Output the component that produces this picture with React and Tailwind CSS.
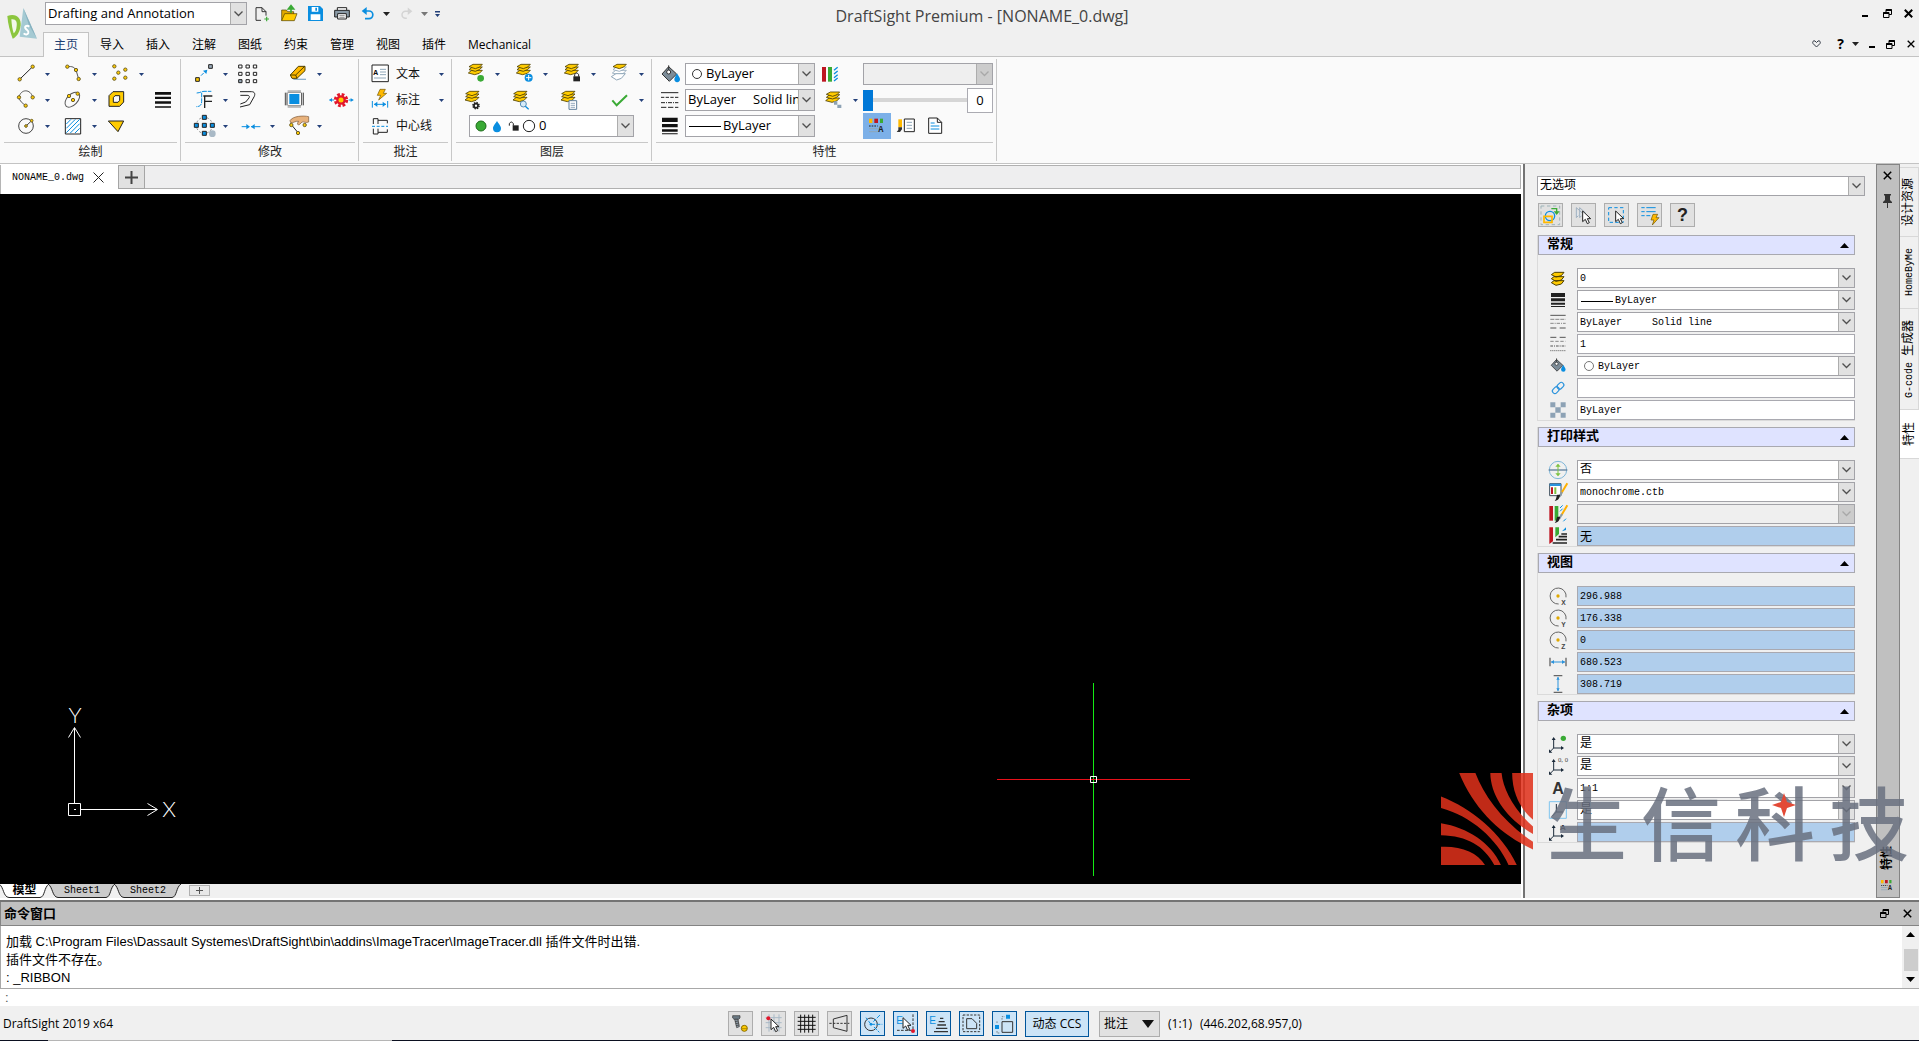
import { useState } from 'react'

/* ---------- shared bits ---------- */

const UI = "font-['Open_Sans','Noto_Sans_CJK_SC',sans-serif]"
const MONO = "font-['Liberation_Mono','Noto_Sans_CJK_SC',monospace]"
const BLUE = '#0a8ee0'

function Ico({ w = 24, h = 20, box = '0 0 72 60', children }) {
  return (
    <svg width={w} height={h} viewBox={box} fill="none" className="block shrink-0 overflow-visible" aria-hidden="true">
      {children}
    </svg>
  )
}

function Node({ x, y, r = 5 }) {
  return <circle cx={x} cy={y} r={r} fill="#ffcb00" stroke="#6f6128" strokeWidth="3" />
}

function Caret() {
  return (
    <button aria-label="展开" className="flex h-5 w-[18px] items-center justify-center">
      <svg width="5" height="3" viewBox="0 0 5 3">
        <path d="M0 0h5L2.500 3z" fill="#24417a" />
      </svg>
    </button>
  )
}

function Chevron({ muted }) {
  return (
    <svg width="9" height="6" viewBox="0 0 9 6" fill="none">
      <path d="M.5 .5l4 4 4-4" stroke={muted ? '#a8a8a8' : '#505050'} strokeWidth="1.300" />
    </svg>
  )
}

function Combo({ label, value, prefix, disabled, className }) {
  return (
    <div className={`relative flex items-center border border-[#a3a3a8] ${disabled ? 'bg-[#efefef]' : 'bg-white'} ${className}`}>
      {prefix}
      <select
        aria-label={label}
        disabled={disabled}
        className="h-full min-w-0 flex-1 appearance-none bg-transparent pr-4 pl-0.5 text-black outline-none"
      >
        <option>{value}</option>
      </select>
      <span
        className={`pointer-events-none absolute inset-y-0 right-0 flex w-4 items-center justify-center border-l border-[#adadad] ${
          disabled ? 'bg-[#cccccc]' : 'bg-[#e1e1e1]'
        }`}
      >
        <Chevron muted={disabled} />
      </span>
    </div>
  )
}

/* ---------- window buttons ---------- */

function Minimize() {
  return (
    <svg width="11" height="11" viewBox="0 0 11 11">
      <path d="M2 7h6v2H2z" fill="#000" />
    </svg>
  )
}

function Restore() {
  return (
    <svg width="9" height="9" viewBox="0 0 9 9" fill="none" stroke="#000">
      <path d="M3 3V.500h5.500v5H6" />
      <path d="M3 1h5.500M.500 4h5.500" strokeWidth="2" />
      <path d="M.500 3.500h5.500v5H.500z" />
    </svg>
  )
}

function Close({ size = 9, stroke = 2 }) {
  return (
    <svg width={size} height={size} viewBox="0 0 9 9" fill="none" stroke="#000" strokeWidth={stroke}>
      <path d="M.8 .8l7.400 7.400M8.200 .8L.8 8.200" />
    </svg>
  )
}

/* ---------- title bar ---------- */

function Logo() {
  return (
    <svg width="31" height="32" viewBox="0 0 93 96" className="block">
      <path d="M52 0l41 92-52-6z" fill="#a5cad3" />
      <path d="M52 0l41 92-24-40z" fill="#86b1bf" />
      <path d="M4 24C30 14 46 30 44 52c-2 20-12 36-24 40C12 70 6 50 4 24z" fill="#8cc63e" />
      <path d="M16 34c14-2 18 8 16 20-1 12-4 18-9 22-4-12-6-26-7-42z" fill="#f3f9ea" />
      <path d="M70 56c-8-6-16 0-11 6 4 5 11 6 8 13-2 5-9 6-14 1" stroke="#fff" strokeWidth="6" fill="none" />
    </svg>
  )
}

function QuickTools() {
  return (
    <div className="flex items-center">
      <button aria-label="新建" className="ml-2">
        <Ico w={15} h={16} box="0 0 45 48">
          <path d="M18 43H3V5h18l12 12v12M21 5v12h12" stroke="#333" strokeWidth="3" />
          <path d="M35 32v14M28 39h14" stroke="#3aaa35" strokeWidth="3.500" />
        </Ico>
      </button>
      <button aria-label="打开" className="ml-[11px]">
        <Ico w={17} h={17} box="0 0 51 51">
          <path d="M2 47V15h14l4 5h18v8" fill="#e0a800" stroke="#4a3b00" strokeWidth="2" />
          <path d="M2 47l9-21h37l-8 21z" fill="#ffcb00" stroke="#4a3b00" strokeWidth="2" />
          <path d="M30 24V8M22 12l8-10 8 10z" stroke="#3aaa35" strokeWidth="5" fill="#3aaa35" />
        </Ico>
      </button>
      <button aria-label="保存" className="ml-2.5">
        <Ico w={15} h={15} box="0 0 45 45">
          <path d="M0 0h36l9 9v36H0z" fill="#0a8ee0" />
          <path d="M11 3h20v14H11zM8 25h29v17H8z" fill="#fff" />
          <path d="M22 5h5v9h-5z" fill="#0a8ee0" />
        </Ico>
      </button>
      <button aria-label="打印" className="ml-[11px]">
        <Ico w={16} h={13} box="0 0 48 39">
          <path d="M10 10V2h28v8" stroke="#222" strokeWidth="3" fill="#fff" />
          <path d="M2 10h44v20H2z" fill="#8a9aa6" stroke="#222" strokeWidth="3" />
          <path d="M11 20h26v16H11z" fill="#fff" stroke="#222" strokeWidth="3" />
          <path d="M16 26h16M16 31h16" stroke="#555" strokeWidth="2" />
        </Ico>
      </button>
      <button aria-label="撤消" className="ml-[11px]">
        <Ico w={14} h={13} box="0 0 42 39">
          <path d="M10 12h14a11 11 0 0 1 0 23H12" stroke="#0a8ee0" strokeWidth="5" />
          <path d="M17 0L2 12l15 12z" fill="#0a8ee0" />
        </Ico>
      </button>
      <button aria-label="撤消列表" className="ml-2">
        <Ico w={7} h={4} box="0 0 7 4">
          <path d="M0 0h7L3.500 4z" fill="#222" />
        </Ico>
      </button>
      <button aria-label="恢复" className="ml-2.5">
        <Ico w={13} h={13} box="0 0 42 39">
          <path d="M32 12H18a11 11 0 0 0 0 23h4" stroke="#d4d4d4" strokeWidth="5" />
          <path d="M25 0l15 12-15 12z" fill="#d4d4d4" />
        </Ico>
      </button>
      <button aria-label="恢复列表" className="ml-2">
        <Ico w={7} h={4} box="0 0 7 4">
          <path d="M0 0h7L3.500 4z" fill="#777" />
        </Ico>
      </button>
      <button aria-label="自定义工具栏" className="ml-[7px]">
        <Ico w={5} h={6} box="0 0 5 6">
          <path d="M0 0h5v1.500H0zM0 3h5L2.500 6z" fill="#24417a" />
        </Ico>
      </button>
    </div>
  )
}

const MENUS = ['主页', '导入', '插入', '注解', '图纸', '约束', '管理', '视图', '插件']

function Header() {
  const [active, setActive] = useState('主页')
  return (
    <header className="flex border-b border-[#c3c3c3] bg-[#f0f0f0]">
      <div className="w-[43px] pt-2 pl-1.5">
        <Logo />
      </div>
      <div className="min-w-0 flex-1">
        <div className="flex h-8 items-start">
          <div className="flex pt-0.5 pl-0.5">
            <Combo label="工作空间" value="Drafting and Annotation" className="h-[23px] w-[202px] text-[13px]" />
            <QuickTools />
          </div>
          <h1 className="flex-1 pt-1 pr-[336px] text-center text-base leading-6 text-[#444]">
            DraftSight Premium - [NONAME_0.dwg]
          </h1>
          <div className="flex items-center gap-3 pt-2 pr-1.5">
            <button aria-label="最小化"><Minimize /></button>
            <button aria-label="还原"><Restore /></button>
            <button aria-label="关闭"><Close /></button>
          </div>
        </div>
        <nav className="flex h-6 items-stretch text-xs">
          {MENUS.map((m) => (
            <button
              key={m}
              onClick={() => setActive(m)}
              className={
                m === active
                  ? '-mb-px w-[46px] border border-b-0 border-[#c3c3c3] bg-[#fafafa] text-[#1d3f72]'
                  : 'w-[46px] pt-px text-black'
              }
            >
              {m}
            </button>
          ))}
          <button className="px-[11px] pt-px">Mechanical</button>
          <div className="ml-auto flex items-center gap-3 pr-1">
            <button aria-label="社区" className="mr-1">
              <Ico w={9} h={8} box="0 0 9 8">
                <path d="M4.500 7L1 3.500C0 2 1.500 0 3 1l1.500 1.500L6 1c1.500-1 3 1 2 2.500z" stroke="#333a45" />
              </Ico>
            </button>
            <button className="text-sm font-bold">?</button>
            <button aria-label="帮助列表" className="-ml-1">
              <Ico w={7} h={4} box="0 0 7 4">
                <path d="M0 0h7L3.500 4z" fill="#222" />
              </Ico>
            </button>
            <button aria-label="最小化文档" className="-mx-1"><Minimize /></button>
            <button aria-label="还原文档"><Restore /></button>
            <button aria-label="关闭文档"><Close size={8} stroke={1.5} /></button>
          </div>
        </nav>
      </div>
    </header>
  )
}

/* ---------- ribbon ---------- */

function Stack({ x = 35, y = 13, bottom = '#ffcb00', line = '#4d3f00' }) {
  return (
    <g transform={`translate(${x} ${y})`} strokeWidth="2.500">
      <path d="M-22 14l10-8h32l-9 9-14 4z" fill={bottom} stroke={bottom === '#ffcb00' ? line : '#8fa6b8'} />
      <path d="M-20 4l10-8h30l-9 8-12 5z" fill={bottom} stroke={bottom === '#ffcb00' ? line : '#8fa6b8'} />
      <path d="M-20-5l12-7h28l-8 8-13 5z" fill="#ffcb00" stroke={line} />
    </g>
  )
}

function Tool({ name, caret, children }) {
  return (
    <div className="flex items-center">
      <button aria-label={name}>
        <Ico>{children}</Ico>
      </button>
      {caret && <Caret />}
    </div>
  )
}

function Group({ title, bodyClass, children, className }) {
  return (
    <section className={`flex flex-col border-r border-[#c8c8c8] ${className}`}>
      <div className={`h-[85px] pt-0.5 ${bodyClass}`}>{children}</div>
      <h2 className="mr-[3px] ml-1 border-t border-[#c8c8c8] text-center text-xs leading-[18px] text-[#222]">{title}</h2>
    </section>
  )
}

function DrawGroup() {
  return (
    <Group title="绘制" className="w-[181px]" bodyClass="pl-3.5 grid grid-cols-[47px_47px_47px_24px] auto-rows-[26px] items-center">
      <Tool name="直线" caret>
        <path d="M17 46L56 8" stroke="#222" strokeWidth="3" />
        <Node x={56} y={8} />
        <Node x={17} y={46} />
      </Tool>
      <Tool name="多段线" caret>
        <path d="M19 8C34 6 40 10 45 18L53 45" stroke="#555" strokeWidth="3" />
        <Node x={19} y={8} />
        <Node x={45} y={18} />
        <Node x={53} y={45} />
      </Tool>
      <Tool name="点" caret>
        <Node x={19} y={7} />
        <Node x={52} y={17} />
        <Node x={31} y={26} />
        <Node x={52} y={41} />
        <Node x={19} y={44} />
      </Tool>
      <span />
      <Tool name="圆弧" caret>
        <path d="M15 22C20-4 50-4 56 22M15 22C17 34 24 38 35 47" stroke="#555" strokeWidth="3" />
        <Node x={15} y={22} />
        <Node x={56} y={22} />
        <Node x={35} y={47} />
      </Tool>
      <Tool name="椭圆" caret>
        <ellipse cx="34" cy="29" rx="27" ry="16" transform="rotate(-46 34 29)" stroke="#555" strokeWidth="3" />
        <Node x={50} y={11} />
        <Node x={24} y={18} />
        <Node x={36} y={30} />
      </Tool>
      <Tool name="面域">
        <path d="M15 5h32v31L35 49H3V17z" fill="#ffcb00" stroke="#222" strokeWidth="3" />
        <path d="M21 17h14v14l-5 6H16V23z" fill="#fafafa" stroke="#222" strokeWidth="3" />
      </Tool>
      <Tool name="多线">
        <path d="M0 6h48v8H0zM0 20h48v7H0zM0 34h48v7H0zM0 49h48v4H0z" fill="#111" />
      </Tool>
      <Tool name="圆" caret>
        <circle cx="36" cy="30" r="22" stroke="#444" strokeWidth="3" />
        <path d="M36 30L53 14" stroke="#444" strokeWidth="3" />
        <Node x={36} y={30} r={4} />
        <Node x={53} y={14} r={4} />
      </Tool>
      <Tool name="剖面线" caret>
        <path d="M13 8h46v46H13z" fill="#fff" stroke="#222" strokeWidth="3" />
        <path d="M16 24l14-14M16 37l27-27M16 50l40-40M28 51l28-28M42 51l14-14" stroke={BLUE} strokeWidth="3" />
      </Tool>
      <Tool name="遮罩">
        <path d="M1 15h46L30 47z" fill="#ffcb00" stroke="#222" strokeWidth="3" />
      </Tool>
    </Group>
  )
}

function ModifyGroup() {
  return (
    <Group title="修改" className="w-[178px]" bodyClass="pl-[11px] grid grid-cols-[47px_47px_47px_24px] auto-rows-[26px] items-center">
      <Tool name="移动" caret>
        <path d="M11 41h11v11H11z" fill="#ffcb00" stroke="#222" strokeWidth="3" />
        <path d="M50 2h11v11H50z" fill="#9fb0bf" stroke="#222" strokeWidth="3" />
        <path d="M27 35l8-8" stroke={BLUE} strokeWidth="3" />
        <path d="M46 17l-3 13-10-10z" fill={BLUE} />
      </Tool>
      <Tool name="阵列">
        {[0, 22, 44].map((y) =>
          [0, 22, 44].map((x) => (
            <path
              key={`${x}-${y}`}
              d={`M${x - 1} ${y + 3}h10v9h-10z`}
              stroke="#222"
              strokeWidth="3"
              fill={x === 0 && y === 44 ? '#9fb0bf' : '#fff'}
            />
          ))
        )}
      </Tool>
      <Tool name="删除" caret>
        <path d="M22 46h38" stroke="#8fb0cc" strokeWidth="4" />
        <path d="M13 33L37 7h20v13L33 43H18z" fill="#ffb900" stroke="#4d3f00" strokeWidth="3" />
        <path d="M13 33h16l27-26M29 33l4 10" stroke="#4d3f00" strokeWidth="3" />
      </Tool>
      <span />
      <Tool name="修剪" caret>
        <path d="M34 18h27M36 34h24M38 18v36" stroke="#222" strokeWidth="4" />
        <path d="M14 9c10 0 14-5 22-5h22M29 8v26c0 10-4 16-17 16" stroke={BLUE} strokeWidth="3" strokeDasharray="14 3" />
      </Tool>
      <Tool name="偏移">
        <path d="M3 5h34c10 0 12 6 9 14L32 44 3 51" stroke="#222" strokeWidth="3" />
        <path d="M4 16h20c8 0 8 4 6 8L20 36 4 42" stroke="#222" strokeWidth="3" />
      </Tool>
      <Tool name="拉伸">
        <path d="M10 12h30v30H10z" fill={BLUE} />
        <path d="M5 3h40M5 7h40M5 47h40M5 51h40" stroke="#555" strokeWidth="2" />
        <path d="M-2 8v38M3 8v38M47 8v38M52 8v38" stroke="#222" strokeWidth="2.500" />
      </Tool>
      <Tool name="分解">
        <path d="M-11 30h14M47 30h14" stroke={BLUE} strokeWidth="3" />
        <path d="M-3 24l-8 6 8 6zM53 24l8 6-8 6z" fill={BLUE} />
        <circle cx="24" cy="30" r="17" stroke="#e3162a" strokeWidth="9" strokeDasharray="8 5.350" />
        <circle cx="24" cy="30" r="11" fill="#ffcb00" stroke="#e3162a" strokeWidth="7" />
      </Tool>
      <Tool name="环形阵列" caret>
        <circle cx="37" cy="28" r="24" stroke="#555" strokeWidth="2" strokeDasharray="6 6" />
        {[[37, 4], [13, 28], [37, 28], [61, 28], [37, 52]].map(([x, y]) => (
          <path key={`${x}-${y}`} d={`M${x - 6} ${y - 6}h12v12h-12z`} fill={BLUE} stroke="#222" strokeWidth="3" />
        ))}
        <circle cx="61" cy="53" r="10" fill="#a9b9c6" />
      </Tool>
      <Tool name="打断" caret>
        <path d="M8 32h16M36 32h28" stroke={BLUE} strokeWidth="3" />
        <path d="M22 24l11 8-11 8zM47 24l-11 8 11 8z" fill={BLUE} />
      </Tool>
      <Tool name="编辑多段线" caret>
        <path d="M16 26L36 50" stroke="#222" strokeWidth="3" />
        <path d="M12 14c8-14 40-16 56-12v16c-10 4-14-2-20 0L40 26c-8 2-6-6-2-10-10-2-16 6-24 4z" fill="#e8b27c" stroke="#7a5636" strokeWidth="2" />
        <Node x={16} y={27} />
        <Node x={56} y={27} />
        <Node x={36} y={51} />
      </Tool>
    </Group>
  )
}

function NoteRow({ name, caret, children }) {
  return (
    <div className="flex h-[26px] items-center">
      <button className="flex items-center gap-1">
        <Ico>{children}</Ico>
        <span className="text-xs text-[#111]">{name}</span>
      </button>
      {caret && (
        <span className="ml-auto">
          <Caret />
        </span>
      )}
    </div>
  )
}

function AnnotateGroup() {
  return (
    <Group title="批注" className="w-[93px]" bodyClass="pl-[9px] pr-px">
      <NoteRow name="文本" caret>
        <path d="M12 3h49v50H12z" fill="#fff" stroke="#222" strokeWidth="3" />
        <text x="16" y="34" fontSize="24" fontWeight="bold" fontFamily="Liberation Mono, monospace" fill="#111">A</text>
        <path d="M36 16h18M36 24h18M36 32h18M18 42h36" stroke="#8fa6b8" strokeWidth="3" />
      </NoteRow>
      <NoteRow name="标注" caret>
        <path d="M36-2h16l-6 12h10L32 30l6-14H28z" fill="#ffb900" stroke="#6b5200" strokeWidth="2" />
        <path d="M13 33v20M59 33v20M18 43h36" stroke={BLUE} strokeWidth="3" />
        <path d="M28 35l-10 8 10 8zM44 35l10 8-10 8z" fill={BLUE} />
      </NoteRow>
      <NoteRow name="中心线">
        <path d="M16 24V8h14v16M16 38v16h14V38M30 13h28v9M30 49h28v-9" stroke="#222" strokeWidth="3" />
        <path d="M12 31h48" stroke={BLUE} strokeWidth="3" strokeDasharray="9 5" />
      </NoteRow>
    </Group>
  )
}

function LayerGroup() {
  return (
    <Group title="图层" className="w-[200px]" bodyClass="pl-3">
      <div className="grid auto-rows-[26px] grid-cols-[48px_48px_48px_42px] items-center">
        <Tool name="显示图层" caret>
          <Stack />
          <circle cx="50" cy="43" r="10" fill="#3aaa35" />
        </Tool>
        <Tool name="冻结图层" caret>
          <Stack />
          <circle cx="50" cy="41" r="12" fill={BLUE} />
          <path d="M50 33v16M42 41h16" stroke="#fff" strokeWidth="3" />
        </Tool>
        <Tool name="锁定图层" caret>
          <Stack />
          <path d="M44 38v-6q6-10 12 0v6" stroke="#222" strokeWidth="3" />
          <path d="M40 37h20v15H40z" fill="#222" />
        </Tool>
        <Tool name="隔离图层" caret>
          <Stack bottom="#fff" />
          <path d="M10 38l14-9h28l-12 14-14 5z" fill="#fff" stroke="#8fa6b8" strokeWidth="3" />
        </Tool>
        <Tool name="图层管理器">
          <Stack x={25} y={16} />
          <circle cx="36" cy="47" r="9" stroke="#222" strokeWidth="5" strokeDasharray="4 3.070" />
          <circle cx="36" cy="47" r="6" fill="#fff" stroke="#222" strokeWidth="5" />
        </Tool>
        <Tool name="图层预览">
          <Stack x={25} y={16} />
          <circle cx="34" cy="42" r="9" fill="#d6ecfa" stroke="#5a8db5" strokeWidth="3" />
          <path d="M40 49l10 9" stroke={BLUE} strokeWidth="4" />
        </Tool>
        <Tool name="图层状态">
          <Stack x={25} y={16} />
          <path d="M27 32h23v26H27z" fill="#fff" stroke="#5f7f9c" strokeWidth="3" />
          <path d="M32 40h13M32 46h13M32 52h13" stroke="#5f7f9c" strokeWidth="2" />
        </Tool>
        <Tool name="激活图层" caret>
          <path d="M13 31l13 15L57 16" stroke="#3aaa35" strokeWidth="6" />
        </Tool>
      </div>
      <Combo
        label="当前图层"
        value="0"
        className="mt-0.5 ml-[5px] h-[22px] w-[165px] text-[13px]"
        prefix={
          <Ico w={67} h={14} box="0 0 201 42">
            <circle cx="33" cy="21" r="15" fill="#3aaa35" stroke="#1d6b1a" strokeWidth="3" />
            <path d="M81 6c8 12 12 16 12 22a12 12 0 0 1-24 0c0-6 4-10 12-22z" fill={BLUE} />
            <path d="M118 20v-6q6-10 12 0v6" stroke="#222" strokeWidth="3" />
            <path d="M128 19h18v16h-18z" fill="#222" />
            <circle cx="177" cy="21" r="17" fill="#fff" stroke="#222" strokeWidth="3" />
          </Ico>
        }
      />
    </Group>
  )
}

function PaintIcon() {
  return (
    <>
      <path d="M12 30L32 8l24 22-22 22z" fill="#7c8c98" stroke="#333" strokeWidth="3" />
      <path d="M32 4v22" stroke="#333" strokeWidth="3" />
      <circle cx="32" cy="24" r="6" fill="#fff" stroke="#333" strokeWidth="3" />
      <path d="M57 28c6 10 9 14 9 18a8 8 0 0 1-17 0c0-4 3-8 8-18z" fill={BLUE} />
    </>
  )
}

function PropGlyph() {
  return (
    <>
      <path d="M12 8h10v13H12z" fill="#ffb900" />
      <path d="M28 8h11v13H28z" fill="#be1622" />
      <path d="M45 8h9v13h-9z" fill="#3aaa35" />
      <path d="M12 30h26" stroke="#222" strokeWidth="3" strokeDasharray="5 3" />
      <path d="M12 38h26M12 47h26" stroke="#8fa6b8" strokeWidth="3" />
      <text x="40" y="49" fontSize="26" fontWeight="bold" fontFamily="Liberation Mono, monospace" fill="#222">A</text>
    </>
  )
}

function PropertiesGroup() {
  const [transparency, setTransparency] = useState(0)
  const swatch = (
    <Ico w={18} h={14} box="0 0 18 14">
      <circle cx="11" cy="7" r="4.500" stroke="#333" />
    </Ico>
  )
  const dash = (
    <Ico w={35} h={14} box="0 0 35 14">
      <path d="M3 7.500h32" stroke="#000" />
    </Ico>
  )
  return (
    <Group title="特性" className="w-[345px]" bodyClass="flex pl-1.5">
      <div className="flex flex-col">
        <div className="flex h-[26px] items-center">
          <Ico><PaintIcon /></Ico>
          <Combo label="线条颜色" value="ByLayer" prefix={swatch} className="ml-[3px] h-[22px] w-[130px] text-[13px]" />
        </div>
        <div className="flex h-[26px] items-center">
          <Ico>
            <g stroke="#222" strokeWidth="3">
              <path d="M9 8h52" />
              <path d="M9 22h52" strokeDasharray="10 4" />
              <path d="M9 38h52" strokeDasharray="12 3 3 3" />
              <path d="M9 52h52" strokeDasharray="16 5" />
            </g>
          </Ico>
          <Combo
            label="线条样式"
            value={'ByLayer\u00a0\u00a0\u00a0\u00a0\u00a0Solid line'}
            className="ml-[3px] h-[22px] w-[130px] text-[13px]"
          />
        </div>
        <div className="flex h-[26px] items-center">
          <Ico>
            <path d="M12 5h47v13H12zM12 24h47v10H12zM12 40h47v7H12zM12 52h47v3H12z" fill="#111" />
          </Ico>
          <Combo label="线宽" value="ByLayer" prefix={dash} className="ml-[3px] h-[22px] w-[130px] text-[13px]" />
        </div>
      </div>

      <div className="ml-[3px] w-[42px]">
        <div className="flex h-[26px] items-center">
          <Tool name="图案">
            <path d="M12 9h12v44H12z" fill="#be1622" />
            <path d="M30 9h12v44H30z" fill="#3aaa35" />
            <path d="M48 19l11-9M48 30l11-9M48 41l11-9M48 51l11-9" stroke={BLUE} strokeWidth="4" />
          </Tool>
        </div>
        <div className="flex h-[26px] items-center pl-1">
          <Tool name="图层透明度" caret>
            <Stack x={33} y={18} />
            <path d="M36 34h10v10H36zM46 44h12v10H46z" fill="#8da2b5" />
          </Tool>
        </div>
      </div>

      <div className="ml-[3px] w-[130px]">
        <div className="flex h-[26px] items-center">
          <Combo label="打印样式" value="" disabled className="h-[22px] w-full text-[13px]" />
        </div>
        <div className="flex h-[26px] items-center">
          <input
            type="range"
            aria-label="透明度"
            min="0"
            max="90"
            value={transparency}
            onChange={(e) => setTransparency(Number(e.target.value))}
            className="h-[21px] w-[104px] appearance-none bg-[linear-gradient(#d6d6d6,#d6d6d6)] bg-[length:100%_4px] bg-center bg-no-repeat [&::-webkit-slider-thumb]:h-[21px] [&::-webkit-slider-thumb]:w-2.5 [&::-webkit-slider-thumb]:appearance-none [&::-webkit-slider-thumb]:bg-[#0078d7]"
          />
          <input
            aria-label="透明度值"
            value={transparency}
            onChange={(e) => setTransparency(Number(e.target.value) || 0)}
            className="h-[25px] w-[26px] border border-[#ababb2] bg-white text-center text-[13px] text-black"
          />
        </div>
        <div className="flex h-[26px] items-center">
          <button aria-label="特性面板" className="flex h-[26px] w-7 items-center justify-center bg-[#7cb0e8]">
            <Ico><PropGlyph /></Ico>
          </button>
          <button aria-label="特性刷" className="ml-1">
            <Ico>
              <path d="M10 10h11v24H10z" fill="#ffb900" />
              <path d="M10 34h11v6l-6 8H5l5-6z" fill="#333" />
              <path d="M28 9h30v38H28z" fill="#fff" stroke="#222" strokeWidth="3" />
              <path d="M35 19h16M35 28h16M35 37h16" stroke="#8fa6b8" strokeWidth="3" />
            </Ico>
          </button>
          <button aria-label="属性列表" className="ml-1.5">
            <Ico>
              <path d="M11 6h26l13 13v33H11z" fill="#fff" stroke="#222" strokeWidth="3" />
              <path d="M37 6v13h13" stroke="#222" strokeWidth="3" />
              <path d="M17 21h12M17 30h26M17 39h26" stroke={BLUE} strokeWidth="3" />
            </Ico>
          </button>
        </div>
      </div>
    </Group>
  )
}

function Ribbon() {
  return (
    <div className="flex h-[107px] border-b border-[#c3c3c3] bg-[#fafafa] py-0.5">
      <DrawGroup />
      <ModifyGroup />
      <AnnotateGroup />
      <LayerGroup />
      <PropertiesGroup />
    </div>
  )
}

/* ---------- drawing area ---------- */

function DocTabs() {
  return (
    <div className={`flex h-[30px] bg-white pt-px text-[10px] ${MONO}`}>
      <div className="flex w-[118px] items-center gap-[9px] border-l border-[#b5b5b5] pb-1 pl-[11px]">
        <span className="text-black">NONAME_0.dwg</span>
        <button aria-label="关闭图纸">
          <svg width="11" height="11" viewBox="0 0 11 11">
            <path d="M.500 .500l10 10M10.500 .500l-10 10" stroke="#222" />
          </svg>
        </button>
      </div>
      <button aria-label="新建图纸" className="flex h-6 w-[27px] items-center justify-center border border-[#a5a5a5] bg-[#e1e1e1]">
        <svg width="13" height="13" viewBox="0 0 13 13">
          <path d="M6.500 0v13M0 6.500h13" stroke="#444" strokeWidth="2" />
        </svg>
      </button>
      <div className="h-6 flex-1 border-y border-r border-[#b0b0b0] bg-[#eeeeef]" />
    </div>
  )
}

function Canvas() {
  return (
    <main className="relative flex-1 overflow-hidden bg-black">
      {/* coordinate system marker */}
      <svg width="120" height="120" viewBox="0 0 120 120" fill="none" stroke="#fff" className="absolute bottom-[63px] left-[62px]">
        <path d="M6.500 102.500h12v12h-12zM12 108.500h2M12.500 102V27M6.500 36.500l6-10 6 10" />
        <path d="M19 108.500h76M85.500 102.500l10 6-10 6" />
        <g fill="#fff" stroke="none" fontSize="22" fontFamily="Lato, sans-serif" fontWeight="300" textAnchor="middle">
          <text x="13" y="22">Y</text>
          <text x="107" y="116">X</text>
        </g>
      </svg>
      {/* crosshair */}
      <svg width="193" height="193" viewBox="0 0 193 193" fill="none" className="absolute right-[331px] bottom-2">
        <path d="M96.500 0v193" stroke="#14ea14" />
        <path d="M0 96.500h193" stroke="#e8101a" />
        <path d="M93.500 93.500h6v6h-6z" stroke="#fff" />
      </svg>
    </main>
  )
}

function SheetTab({ name, width, active, className }) {
  return (
    <button className={`relative flex h-3.5 items-center justify-center leading-[14px] text-black ${className}`}>
      <svg width={width} height="14" viewBox={`0 0 ${width} 14`} className="absolute inset-0 overflow-visible">
        <path
          d={`M-1 0C4 3 3 13 9 13.500H${width - 9}C${width - 4} 13 ${width - 5} 3 ${width} 0`}
          fill={active ? '#fff' : '#cbcbcb'}
          stroke="#222"
        />
      </svg>
      <span className="relative">{name}</span>
    </button>
  )
}

function SheetTabs() {
  return (
    <div className={`flex h-3.5 bg-[#f0f0f0] text-[10px] ${MONO}`}>
      <SheetTab name="模型" width={49} active className="w-[49px] text-xs font-bold" />
      <SheetTab name="Sheet1" width={66} className="w-[66px]" />
      <SheetTab name="Sheet2" width={66} className="w-[66px]" />
      <button aria-label="新建图纸页" className="mt-px ml-2 flex h-[11px] w-[21px] items-center justify-center border border-[#b0b0b0] bg-[#e8e8e8]">
        <svg width="7" height="7" viewBox="0 0 7 7">
          <path d="M3.500 0v7M0 3.500h7" stroke="#555" />
        </svg>
      </button>
    </div>
  )
}

/* ---------- properties panel ---------- */

function Axes({ children }) {
  return (
    <>
      <path d="M17 14v28h26M17 42L5 54" stroke="#1b2a3a" strokeWidth="3" />
      <path d="M11 18l6-9 6 9zM39 36l9 6-9 6zM3 46v10h10z" fill="#1b2a3a" />
      {children}
    </>
  )
}

function CenterIcon({ axis }) {
  return (
    <>
      <path d="M54 34A24 24 0 1 0 32 54" stroke="#666" strokeWidth="3" />
      <circle cx="30" cy="30" r="5" fill="#e0a800" />
      <text x="40" y="56" fontSize="20" fontWeight="bold" fontFamily="Liberation Sans, sans-serif" fill="#444">{axis}</text>
    </>
  )
}

function Brush() {
  return (
    <>
      <path d="M58 4L40 34" stroke="#ffb000" strokeWidth="6" />
      <path d="M42 30L34 44" stroke="#8a9aa6" strokeWidth="6" />
      <path d="M36 38c0 10-6 18-16 18 6-4 4-12 8-18z" fill="#222" />
    </>
  )
}

const ring = (
  <Ico w={18} h={14} box="0 0 18 14">
    <circle cx="11" cy="7" r="4.500" stroke="#777" />
  </Ico>
)
const longDash = (
  <Ico w={35} h={14} box="0 0 35 14">
    <path d="M3 8.500h32" stroke="#000" />
  </Ico>
)

const SECTIONS = [
  {
    title: '常规',
    rows: [
      { name: '图层', kind: 'combo', value: '0', icon: <path d="M10 44l8-6h30l-8 10-16 4zM10 32l8-6h30l-8 10-16 4zM10 20l10-7h28l-8 10-16 4z" fill="#ffcb00" stroke="#4d3f00" strokeWidth="3" /> },
      { name: '线宽', kind: 'combo', value: 'ByLayer', prefix: longDash, icon: <path d="M9 9h42v12H9zM9 25h42v9H9zM9 38h42v6H9zM9 48h42v3H9z" fill="#222" /> },
      { name: '线条样式', kind: 'combo', value: 'ByLayer\u00a0\u00a0\u00a0\u00a0\u00a0Solid line', icon: <><path d="M7 10h46" stroke="#555" strokeWidth="3" /><path d="M7 22h46" stroke="#888" strokeWidth="3" strokeDasharray="12 3" /><path d="M7 34h46" stroke="#888" strokeWidth="3" strokeDasharray="10 3 3 3" /><path d="M7 48h46" stroke="#555" strokeWidth="3" strokeDasharray="18 10" /></> },
      { name: '线型比例', kind: 'text', value: '1', icon: <><path d="M7 10h46" stroke="#555" strokeWidth="3" strokeDasharray="18 10" /><path d="M7 22h46" stroke="#888" strokeWidth="3" strokeDasharray="10 5" /><path d="M7 36h46" stroke="#555" strokeWidth="3" strokeDasharray="8 3 3 3" /><path d="M7 50h46" stroke="#555" strokeWidth="3" strokeDasharray="3 3" /></> },
      { name: '颜色', kind: 'combo', value: 'ByLayer', prefix: ring, icon: <g transform="translate(0 4) scale(.8)"><PaintIcon /></g> },
      { name: '超链接', kind: 'text', value: '', icon: <g stroke="#2b93dc" strokeWidth="3.500"><rect x="-11" y="-7" width="22" height="15" rx="7" transform="translate(23 36) rotate(-45)" /><rect x="-11" y="-7" width="22" height="15" rx="7" transform="translate(37 23) rotate(-45)" /></g> },
      { name: '透明度', kind: 'text', value: 'ByLayer', icon: <path d="M7 7h15v15H7zM38 7h15v15H38zM22 22h16v16H22zM7 38h15v15H7zM38 38h15v15H38z" fill="#8da2b5" /> },
    ],
  },
  {
    title: '打印样式',
    rows: [
      { name: '打印', kind: 'combo', value: '否', icon: <><circle cx="30" cy="30" r="26" stroke="#7fb6d8" strokeWidth="3" /><path d="M2 30h56" stroke="#5f7f9c" strokeWidth="4" /><path d="M30 14v32" stroke="#7cc242" strokeWidth="3" /><path d="M22 20l8-9 8 9zM22 40l8 9 8-9z" fill="#7cc242" /></> },
      { name: '打印样式表', kind: 'combo', value: 'monochrome.ctb', icon: <><path d="M5 5h34v36H5z" fill="#fff" stroke="#3b4b5a" strokeWidth="3" /><path d="M5 5h34v7H5z" fill="#2b93dc" /><path d="M9 16h6v20H9z" fill="#be1622" /><path d="M19 16h6v20h-6z" fill="#7cc242" /><Brush /></> },
      { name: '打印样式名', kind: 'combo', value: '', disabled: true, icon: <><path d="M4 6h11v44H4z" fill="#be1622" /><path d="M20 6h11v44H20z" fill="#3aaa35" /><path d="M36 12l8-8M36 22l8-8M46 52l8-8" stroke={BLUE} strokeWidth="3" /><Brush /></> },
      { name: '打印表类型', kind: 'readonly', value: '无', icon: <><path d="M4 4h11v42L4 54z" fill="#be1622" /><path d="M22 4h11v20l-11 10z" fill="#3aaa35" /><path d="M42 16l12-12v8z" fill={BLUE} /><path d="M40 24h17M32 32h25M24 41h33M14 51h43" stroke="#222" strokeWidth="5" /></> },
    ],
  },
  {
    title: '视图',
    rows: [
      { name: '中心 X', kind: 'readonly', value: '296.988', icon: <CenterIcon axis="X" /> },
      { name: '中心 Y', kind: 'readonly', value: '176.338', icon: <CenterIcon axis="Y" /> },
      { name: '中心 Z', kind: 'readonly', value: '0', icon: <CenterIcon axis="Z" /> },
      { name: '宽度', kind: 'readonly', value: '680.523', icon: <><path d="M6 17v26M54 17v26" stroke="#666" strokeWidth="4" /><path d="M9 30h42" stroke="#2b93dc" strokeWidth="3" /><path d="M18 24l-9 6 9 6zM42 24l9 6-9 6z" fill="#2b93dc" /></> },
      { name: '高度', kind: 'readonly', value: '308.719', icon: <><path d="M17 5h26M17 55h26" stroke="#666" strokeWidth="4" /><path d="M30 9v42" stroke="#2b93dc" strokeWidth="3" /><path d="M25 17l5-8 5 8zM25 43l5 8 5-8z" fill="#2b93dc" /></> },
    ],
  },
  {
    title: '杂项',
    rows: [
      { name: 'CCS 图标', kind: 'combo', value: '是', icon: <Axes><circle cx="46" cy="13" r="8" fill="#3aaa35" /></Axes> },
      { name: '原点 CCS', kind: 'combo', value: '是', icon: <Axes><text x="30" y="17" fontSize="20" fontFamily="Liberation Serif, serif" fill="#444">0, 0</text></Axes> },
      { name: '注释比例', kind: 'combo', value: '1:1', icon: <text x="30" y="48" fontSize="48" textAnchor="middle" fontWeight="bold" fontFamily="Liberation Sans, sans-serif" fill="#333">A</text> },
      { name: '视口 CCS', kind: 'combo', value: '是', icon: <><path d="M4 5h51v50H4z" stroke="#7fc4ee" strokeWidth="3" /><path d="M25 12v24h20M25 36L13 48" stroke="#1b2a3a" strokeWidth="3" /></> },
      { name: 'CCS 名称', kind: 'readonly', value: '', icon: <Axes><text x="36" y="23" fontSize="24" fontWeight="bold" fontFamily="Liberation Sans, sans-serif" fill="#222">A</text></Axes> },
    ],
  },
]

function PropRow({ row }) {
  const size = /[\u4e00-\u9fff]/.test(row.value) ? 'text-xs' : 'text-[10px]'
  return (
    <div className="flex h-5 items-center">
      <div className="flex w-[39px] justify-center">
        <Ico w={20} h={20} box="0 0 60 60">{row.icon}</Ico>
      </div>
      {row.kind === 'combo' ? (
        <Combo label={row.name} value={row.value} prefix={row.prefix} disabled={row.disabled} className={`h-5 flex-1 ${size}`} />
      ) : (
        <input
          aria-label={row.name}
          readOnly={row.kind === 'readonly'}
          defaultValue={row.value}
          className={`h-5 min-w-0 flex-1 border border-[#a9a9b0] pl-0.5 text-black outline-none ${size} ${
            row.kind === 'readonly' ? 'bg-[#b0ceec]' : 'bg-white'
          }`}
        />
      )}
    </div>
  )
}

function Section({ title, rows }) {
  const [open, setOpen] = useState(true)
  return (
    <section className="mb-1.5 border border-t-0 border-r-0 border-[#dadada]">
      <button
        onClick={() => setOpen(!open)}
        className="flex h-5 w-full items-center justify-between border border-[#a9a9b0] bg-[#dfe3ff] pr-[5px] pl-2"
      >
        <span className="text-[13px] leading-4 font-bold text-black">{title}</span>
        <svg width="9" height="5" viewBox="0 0 9 5">
          <path d="M0 5h9L4.500 0z" fill="#000" />
        </svg>
      </button>
      {open && (
        <div className="flex flex-col gap-0.5 pt-[13px]">
          {rows.map((row) => (
            <PropRow key={row.name} row={row} />
          ))}
        </div>
      )}
    </section>
  )
}

function PanelButton({ name, children }) {
  return (
    <button aria-label={name} className="flex h-6 w-[25px] items-center justify-center border border-[#adadad] bg-[#e1e1e1]">
      {children}
    </button>
  )
}

function Pointer({ x = 0, y = 0 }) {
  return <path transform={`translate(${x} ${y})`} d="M0 0v32l8-7 6 13 6-3-6-12h10z" fill="#fff" stroke="#222" strokeWidth="3" />
}

function PropertiesPanel() {
  return (
    <aside className={`w-[351px] bg-[#f0f0f0] pt-3 pl-3 ${MONO}`}>
      <Combo label="选择" value="无选项" className="h-5 w-[328px] text-xs" />
      <div className="mt-[7px] mb-2 flex gap-2 pl-px">
        <PanelButton name="选择循环">
          <Ico w={21} h={21} box="0 0 63 63">
            <path d="M3 3h56v56H3z" stroke="#9db3b8" strokeWidth="3" strokeDasharray="10 8" />
            <circle cx="30" cy="33" r="14" stroke={BLUE} strokeWidth="4" />
            <path d="M12 34h24v18H12z" stroke="#ffb900" strokeWidth="5" />
            <path d="M34 11h16v10" stroke="#3aaa35" strokeWidth="4" />
            <path d="M41 19h18l-9 11z" fill="#3aaa35" />
          </Ico>
        </PanelButton>
        <PanelButton name="选择匹配">
          <Ico w={21} h={21} box="0 0 63 63">
            <path d="M10 8v30l6-6M20 8v30l6-6M10 8l18 16M20 8l18 16" fill="#dfe7ee" stroke="#9fb0c0" strokeWidth="3" />
            <Pointer x={29} y={18} />
          </Ico>
        </PanelButton>
        <PanelButton name="选择实体">
          <Ico w={21} h={21} box="0 0 63 63">
            <path d="M8 8h44v44H8z" stroke={BLUE} strokeWidth="3" strokeDasharray="10 7" />
            <Pointer x={29} y={18} />
          </Ico>
        </PanelButton>
        <PanelButton name="智能选择">
          <Ico w={21} h={21} box="0 0 63 63">
            <path d="M7 8h10M22 8h28M7 20h10M22 20h28M7 32h10M22 32h12" stroke={BLUE} strokeWidth="3" />
            <path d="M42 28h14l-5 10h9L40 60l5-15h-9z" fill="#ffb900" stroke="#6b5200" strokeWidth="2" />
          </Ico>
        </PanelButton>
        <PanelButton name="帮助">
          <span className="font-['Liberation_Sans',sans-serif] text-lg leading-5 font-bold text-[#222]">?</span>
        </PanelButton>
      </div>
      <div className="w-[318px]">
        {SECTIONS.map((s) => (
          <Section key={s.title} {...s} />
        ))}
      </div>
    </aside>
  )
}

const SIDEWAYS = 'rotate-180 [writing-mode:vertical-rl] [text-orientation:sideways]'

function PanelGrip() {
  return (
    <div className="flex w-6 flex-col items-center border border-[#848484] bg-[#c0c0c0] pt-1.5 pr-0.5 pb-1">
      <button aria-label="关闭面板"><Close stroke={1.5} /></button>
      <button aria-label="固定面板" className="mt-3.5">
        <svg width="9" height="14" viewBox="0 0 9 14">
          <path d="M1 0h7v1.500H7V6l2 2v1H0V8l2-2V1.500H1zM4 9h1v5H4z" fill="#333" />
        </svg>
      </button>
      <span className={`mt-auto text-xs leading-4 font-bold text-black ${SIDEWAYS}`}>特性</span>
      <div className="mt-2">
        <Ico w={18} h={15}><PropGlyph /></Ico>
      </div>
    </div>
  )
}

function SideTabs() {
  const tab = 'flex w-[19px] items-center justify-center border-b border-[#d8d8d8] text-black'
  return (
    <div className={`w-[19px] bg-[#f0f0f0] pt-[3px] ${MONO}`}>
      <button className={`${tab} h-[70px] border-t border-r text-xs`}>
        <span className={SIDEWAYS}>设计资源</span>
      </button>
      <button className={`${tab} h-[72px] border-r text-[10px]`}>
        <span className={SIDEWAYS}>HomeByMe</span>
      </button>
      <button className={`${tab} h-[101px] border-r text-[10px]`}>
        <span className={SIDEWAYS}>
          G-code <span className="text-xs">生成器</span>
        </span>
      </button>
      <button className={`${tab} h-[49px] bg-white text-xs`}>
        <span className={SIDEWAYS}>特性</span>
      </button>
    </div>
  )
}

/* ---------- command window ---------- */

function CommandWindow() {
  return (
    <section className="border-t-2 border-[#747474] bg-white">
      <div className="flex h-6 items-center justify-between border-b border-l border-[#848484] bg-[#c0c0c0] pr-[7px] pl-[3px]">
        <h2 className="text-[13px] font-bold text-black">命令窗口</h2>
        <div className="flex gap-3.5">
          <button aria-label="浮动"><Restore /></button>
          <button aria-label="关闭命令窗口"><Close stroke={1.5} /></button>
        </div>
      </div>
      <div className="flex h-[63px] border-b border-l border-[#a8a8a8]">
        <div className="flex-1 pt-[7px] pl-[5px] font-['Liberation_Sans','Noto_Sans_CJK_SC',sans-serif] text-[13px] leading-[18px] text-black">
          <p>加载 C:\Program Files\Dassault Systemes\DraftSight\bin\addins\ImageTracer\ImageTracer.dll 插件文件时出错.</p>
          <p>插件文件不存在。</p>
          <p>: _RIBBON</p>
        </div>
        <div className="flex w-[17px] flex-col items-center bg-[#f0f0f0] py-1.5">
          <svg width="9" height="5" viewBox="0 0 9 5"><path d="M0 5h9L4.500 0z" fill="#000" /></svg>
          <div className="mt-3 h-[22px] w-3.5 bg-[#cdcdcd]" />
          <svg width="9" height="5" viewBox="0 0 9 5" className="mt-auto"><path d="M0 0h9L4.500 5z" fill="#000" /></svg>
        </div>
      </div>
      <label className="flex h-[17px] items-center gap-1 pl-[5px] font-['Liberation_Sans',sans-serif] text-[13px] text-[#555]">
        :
        <input aria-label="命令" className="h-4 flex-1 outline-none" />
      </label>
    </section>
  )
}

/* ---------- status bar ---------- */

function Toggle({ name, on, children }) {
  return (
    <button
      aria-label={name}
      aria-pressed={!!on}
      className={`flex size-[25px] items-center justify-center border ${
        on ? 'border-[#00559b] bg-[#cce4f7]' : 'border-[#adadad] bg-[#e1e1e1]'
      }`}
    >
      <Ico w={21} h={21} box="0 0 63 63">{children}</Ico>
    </button>
  )
}

function StatusBar() {
  return (
    <footer className="flex h-[34px] items-center bg-[#f0f0f0] pt-px text-xs text-black">
      <span className="w-[728px] pl-[3px]">DraftSight 2019 x64</span>
      <div className="flex items-center gap-2">
        <Toggle name="标准件">
          <path d="M8 8h22v7l-4 4H12l-4-4z" fill="#6c7a85" stroke="#333" strokeWidth="2" />
          <path d="M14 19l10 0 4 22-8 3z" fill="#8b98a3" stroke="#333" strokeWidth="2" />
          <path d="M15 26l10-2M17 32l10-2M18 38l10-2" stroke="#333" strokeWidth="2" />
          <circle cx="43" cy="46" r="9" fill="#ffcb00" stroke="#8a6d00" strokeWidth="3" />
          <path d="M35 47h16" stroke="#8a6d00" strokeWidth="2" />
        </Toggle>
        <Toggle name="捕捉">
          <path d="M8 14h48M8 29h48M8 44h48M18 4v52M33 4v52M48 4v52" stroke="#a9b9c6" strokeWidth="3" />
          <Pointer x={24} y={18} />
          <circle cx="16" cy="16" r="6" fill="#e3162a" />
        </Toggle>
        <Toggle name="栅格">
          <path d="M5 13h54M5 25h54M5 37h54M5 49h54M14 5v54M26 5v54M38 5v54M50 5v54" stroke="#111" strokeWidth="3" />
        </Toggle>
        <Toggle name="正交">
          <path d="M13 18L54 7v48L13 44z" stroke="#333" strokeWidth="3" />
          <path d="M1 31h60" stroke="#333" strokeWidth="3" strokeDasharray="7 4" />
        </Toggle>
        <Toggle name="极轴" on>
          <circle cx="27" cy="34" r="19" stroke="#333" strokeWidth="3" />
          <path d="M27 34L12 14M27 34h34M36 42l16 16M34 26L54 6" stroke={BLUE} strokeWidth="3" strokeDasharray="12 4" />
          <circle cx="27" cy="34" r="4" fill={BLUE} />
        </Toggle>
        <Toggle name="实体捕捉" on>
          <text x="4" y="32" fontSize="30" fontFamily="Liberation Sans, sans-serif" fill={BLUE}>E</text>
          <path d="M6 52h48M54 4v48" stroke="#333" strokeWidth="3" strokeDasharray="8 4" />
          <Pointer x={24} y={14} />
          <circle cx="54" cy="54" r="6" fill="#e3162a" />
        </Toggle>
        <Toggle name="实体追踪" on>
          <text x="4" y="32" fontSize="30" fontFamily="Liberation Sans, sans-serif" fill={BLUE}>E</text>
          <path d="M36 16h10M32 26h18M28 36h26M24 46h34M18 56h42" stroke="#333" strokeWidth="4" />
        </Toggle>
        <Toggle name="线宽显示" on>
          <path d="M6 6h50v50H6z" stroke="#333" strokeWidth="3" strokeDasharray="7 4" />
          <path d="M17 17h16l14 14v16H17z" stroke="#333" strokeWidth="3" />
        </Toggle>
        <Toggle name="快速输入" on>
          <path d="M24 26h32v32H24z" stroke="#333" strokeWidth="3" />
          <path d="M36 5h12v12H36zM3 36h12v12H3z" fill={BLUE} />
          <path d="M24 20v-9h8M9 30v-6M9 54v6h9" stroke="#555" strokeWidth="2" strokeDasharray="5 3" />
        </Toggle>
        <button className="h-[26px] w-16 border border-[#00559b] bg-[#cce4f7]">动态 CCS</button>
      </div>
      <div className="relative ml-2.5">
        <select aria-label="注释比例列表" className="h-[26px] w-[61px] appearance-none border border-[#adadad] bg-[#e1e1e1] pl-1 outline-none">
          <option>批注</option>
        </select>
        <svg width="12" height="8" viewBox="0 0 12 8" className="pointer-events-none absolute top-[9px] right-1.5">
          <path d="M0 0h12L6 8z" fill="#111" />
        </svg>
      </div>
      <span className="ml-2">(1:1)</span>
      <span className="ml-2">(446.202,68.957,0)</span>
    </footer>
  )
}

function Watermark() {
  return (
    <div className="pointer-events-none absolute right-2.5 bottom-[176px] flex h-[92px] items-center gap-3.5">
      <svg width="92" height="92" viewBox="0 0 278 278" fill="#e0311b" opacity=".86">
        <path d="M55 0h49c26 70 86 150 174 208v23C180 186 100 110 55 0z" />
        <path d="M149 0h34c5 50 37 110 95 162v22C200 140 150 70 149 0z" />
        <path d="M215 0h63v141C240 110 215 60 215 0z" />
        <path d="M0 71c90 35 184 110 229 207h-25C170 200 90 130 0 106z" />
        <path d="M0 152c80 13 150 58 181 126h-20C130 220 80 190 0 188z" />
        <path d="M0 223c60-3 110 17 133 55H0z" />
      </svg>
      <div className="relative flex gap-3.5 font-['Noto_Sans_CJK_SC',sans-serif] text-[80px] leading-[80px] font-medium text-[#68707f]/85">
        <span>生</span>
        <span>信</span>
        <span>科</span>
        <span>技</span>
        <svg width="24" height="24" viewBox="0 0 24 24" className="absolute top-3.5 left-[225px]">
          <path d="M12 0l3 9 9 3-9 3-3 9-3-9-9-3 9-3z" fill="#e34a36" />
        </svg>
      </div>
    </div>
  )
}

export default function App() {
  return (
    <div className={`relative flex min-h-screen flex-col bg-[#f0f0f0] ${UI}`}>
      <Header />
      <Ribbon />
      <div className="flex flex-1">
        <div className="flex min-w-0 flex-1 flex-col">
          <DocTabs />
          <Canvas />
          <SheetTabs />
        </div>
        <div className="w-1 border-r-2 border-[#747474] bg-white" />
        <PropertiesPanel />
        <PanelGrip />
        <SideTabs />
      </div>
      <div className="h-0.5 bg-white" />
      <CommandWindow />
      <StatusBar />
      <div className="flex h-px bg-[#0b1020]">
        <div className="ml-12 w-[344px] bg-[#b5b5b5]" />
      </div>
      <Watermark />
    </div>
  )
}
